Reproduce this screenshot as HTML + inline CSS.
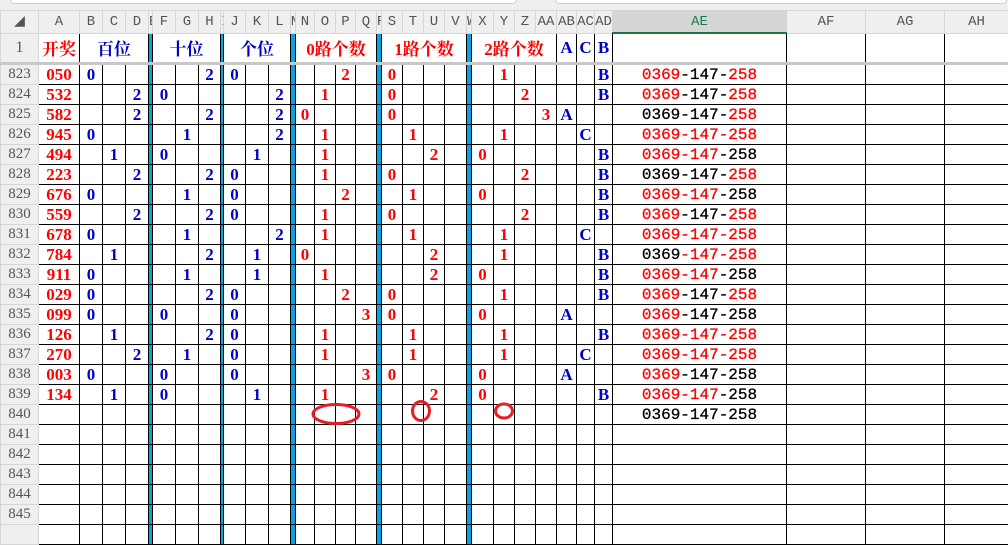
<!DOCTYPE html>
<html><head><meta charset="utf-8">
<style>
body{margin:0;width:1008px;height:528px;overflow:hidden;background:#fff;position:relative}
.top{position:absolute;left:0;top:0;width:1008px;height:10px;background:#efefef}
.top div{position:absolute;top:0;height:3px;background:#fff;border:1px solid #d0d0d0;border-top:none;border-radius:0 0 4px 4px}
table{position:absolute;top:10px;left:0;border-collapse:collapse;table-layout:fixed;width:1008px}
td{border:1px solid #000;padding:0;text-align:center;font:bold 17px "Liberation Serif","Noto Serif CJK SC",serif;white-space:nowrap;overflow:hidden;height:19px;line-height:19px}
th{background:#efefef;border:1px solid #d6d6d6;color:#555;font:normal 15px "Liberation Serif",serif;padding:0;overflow:hidden;white-space:nowrap}
tr.h th{height:21px;font:normal 14px "Liberation Mono",monospace}
tr.one td{height:28px;border-top:1px solid #d6d6d6;border-bottom:3px solid #c8c8c8;font:bold 17px "Liberation Serif","Noto Serif CJK SC",serif}
tr.one th{border-bottom:3px solid #c8c8c8;font-size:16px}
.k{background:#0aa3df}
.r{color:#f00}
.u{color:#0000c8}
td.ae{font:normal 16px "Liberation Mono",monospace;color:#000;-webkit-text-stroke:0.3px}
td.ae span{color:#f00}
th.sel{background:#d6d6d6;color:#1c7a4c;border-bottom:2px solid #217346}
</style></head><body>
<div class="top"><div style="left:10px;width:505px"></div><div style="left:555px;width:450px"></div></div>
<table>
<colgroup><col style="width:38px"><col style="width:41px"><col style="width:23px"><col style="width:23px"><col style="width:23px"><col style="width:4px"><col style="width:23px"><col style="width:23px"><col style="width:22px"><col style="width:3px"><col style="width:22px"><col style="width:23px"><col style="width:22px"><col style="width:5px"><col style="width:19px"><col style="width:21px"><col style="width:20px"><col style="width:21px"><col style="width:5px"><col style="width:21px"><col style="width:21px"><col style="width:21px"><col style="width:22px"><col style="width:5px"><col style="width:22px"><col style="width:21px"><col style="width:21px"><col style="width:21px"><col style="width:20px"><col style="width:18px"><col style="width:18px"><col style="width:174px"><col style="width:79px"><col style="width:79px"><col style="width:64px"></colgroup>
<tr class="h"><th>◢</th><th>A</th><th>B</th><th>C</th><th>D</th><th>E</th><th>F</th><th>G</th><th>H</th><th>I</th><th>J</th><th>K</th><th>L</th><th>M</th><th>N</th><th>O</th><th>P</th><th>Q</th><th>R</th><th>S</th><th>T</th><th>U</th><th>V</th><th>W</th><th>X</th><th>Y</th><th>Z</th><th>AA</th><th>AB</th><th>AC</th><th>AD</th><th class="sel">AE</th><th>AF</th><th>AG</th><th>AH</th></tr>
<tr class="one"><th>1</th><td class="r">开奖</td><td colspan="3" class="u">百位</td><td class="k"></td><td colspan="3" class="u">十位</td><td class="k"></td><td colspan="3" class="u">个位</td><td class="k"></td><td colspan="4" class="r">0路个数</td><td class="k"></td><td colspan="4" class="r">1路个数</td><td class="k"></td><td colspan="4" class="r">2路个数</td><td class="u">A</td><td class="u">C</td><td class="u">B</td><td></td><td></td><td></td><td></td></tr>
<tr><th>823</th><td class="r">050</td><td class="u">0</td><td></td><td></td><td class="k"></td><td></td><td></td><td class="u">2</td><td class="k"></td><td class="u">0</td><td></td><td></td><td class="k"></td><td></td><td></td><td class="r">2</td><td></td><td class="k"></td><td class="r">0</td><td></td><td></td><td></td><td class="k"></td><td></td><td class="r">1</td><td></td><td></td><td></td><td></td><td class="u">B</td><td class="ae"><span>0369</span>-147-<span>258</span></td><td></td><td></td><td></td></tr>
<tr><th>824</th><td class="r">532</td><td></td><td></td><td class="u">2</td><td class="k"></td><td class="u">0</td><td></td><td></td><td class="k"></td><td></td><td></td><td class="u">2</td><td class="k"></td><td></td><td class="r">1</td><td></td><td></td><td class="k"></td><td class="r">0</td><td></td><td></td><td></td><td class="k"></td><td></td><td></td><td class="r">2</td><td></td><td></td><td></td><td class="u">B</td><td class="ae"><span>0369</span>-147-<span>258</span></td><td></td><td></td><td></td></tr>
<tr><th>825</th><td class="r">582</td><td></td><td></td><td class="u">2</td><td class="k"></td><td></td><td></td><td class="u">2</td><td class="k"></td><td></td><td></td><td class="u">2</td><td class="k"></td><td class="r">0</td><td></td><td></td><td></td><td class="k"></td><td class="r">0</td><td></td><td></td><td></td><td class="k"></td><td></td><td></td><td></td><td class="r">3</td><td class="u">A</td><td></td><td></td><td class="ae">0369-147-<span>258</span></td><td></td><td></td><td></td></tr>
<tr><th>826</th><td class="r">945</td><td class="u">0</td><td></td><td></td><td class="k"></td><td></td><td class="u">1</td><td></td><td class="k"></td><td></td><td></td><td class="u">2</td><td class="k"></td><td></td><td class="r">1</td><td></td><td></td><td class="k"></td><td></td><td class="r">1</td><td></td><td></td><td class="k"></td><td></td><td class="r">1</td><td></td><td></td><td></td><td class="u">C</td><td></td><td class="ae"><span>0369-147-258</span></td><td></td><td></td><td></td></tr>
<tr><th>827</th><td class="r">494</td><td></td><td class="u">1</td><td></td><td class="k"></td><td class="u">0</td><td></td><td></td><td class="k"></td><td></td><td class="u">1</td><td></td><td class="k"></td><td></td><td class="r">1</td><td></td><td></td><td class="k"></td><td></td><td></td><td class="r">2</td><td></td><td class="k"></td><td class="r">0</td><td></td><td></td><td></td><td></td><td></td><td class="u">B</td><td class="ae"><span>0369-147</span>-258</td><td></td><td></td><td></td></tr>
<tr><th>828</th><td class="r">223</td><td></td><td></td><td class="u">2</td><td class="k"></td><td></td><td></td><td class="u">2</td><td class="k"></td><td class="u">0</td><td></td><td></td><td class="k"></td><td></td><td class="r">1</td><td></td><td></td><td class="k"></td><td class="r">0</td><td></td><td></td><td></td><td class="k"></td><td></td><td></td><td class="r">2</td><td></td><td></td><td></td><td class="u">B</td><td class="ae">0369-147-<span>258</span></td><td></td><td></td><td></td></tr>
<tr><th>829</th><td class="r">676</td><td class="u">0</td><td></td><td></td><td class="k"></td><td></td><td class="u">1</td><td></td><td class="k"></td><td class="u">0</td><td></td><td></td><td class="k"></td><td></td><td></td><td class="r">2</td><td></td><td class="k"></td><td></td><td class="r">1</td><td></td><td></td><td class="k"></td><td class="r">0</td><td></td><td></td><td></td><td></td><td></td><td class="u">B</td><td class="ae"><span>0369-147</span>-258</td><td></td><td></td><td></td></tr>
<tr><th>830</th><td class="r">559</td><td></td><td></td><td class="u">2</td><td class="k"></td><td></td><td></td><td class="u">2</td><td class="k"></td><td class="u">0</td><td></td><td></td><td class="k"></td><td></td><td class="r">1</td><td></td><td></td><td class="k"></td><td class="r">0</td><td></td><td></td><td></td><td class="k"></td><td></td><td></td><td class="r">2</td><td></td><td></td><td></td><td class="u">B</td><td class="ae"><span>0369</span>-147-<span>258</span></td><td></td><td></td><td></td></tr>
<tr><th>831</th><td class="r">678</td><td class="u">0</td><td></td><td></td><td class="k"></td><td></td><td class="u">1</td><td></td><td class="k"></td><td></td><td></td><td class="u">2</td><td class="k"></td><td></td><td class="r">1</td><td></td><td></td><td class="k"></td><td></td><td class="r">1</td><td></td><td></td><td class="k"></td><td></td><td class="r">1</td><td></td><td></td><td></td><td class="u">C</td><td></td><td class="ae"><span>0369-147-258</span></td><td></td><td></td><td></td></tr>
<tr><th>832</th><td class="r">784</td><td></td><td class="u">1</td><td></td><td class="k"></td><td></td><td></td><td class="u">2</td><td class="k"></td><td></td><td class="u">1</td><td></td><td class="k"></td><td class="r">0</td><td></td><td></td><td></td><td class="k"></td><td></td><td></td><td class="r">2</td><td></td><td class="k"></td><td></td><td class="r">1</td><td></td><td></td><td></td><td></td><td class="u">B</td><td class="ae">0369<span>-147-258</span></td><td></td><td></td><td></td></tr>
<tr><th>833</th><td class="r">911</td><td class="u">0</td><td></td><td></td><td class="k"></td><td></td><td class="u">1</td><td></td><td class="k"></td><td></td><td class="u">1</td><td></td><td class="k"></td><td></td><td class="r">1</td><td></td><td></td><td class="k"></td><td></td><td></td><td class="r">2</td><td></td><td class="k"></td><td class="r">0</td><td></td><td></td><td></td><td></td><td></td><td class="u">B</td><td class="ae"><span>0369-147</span>-258</td><td></td><td></td><td></td></tr>
<tr><th>834</th><td class="r">029</td><td class="u">0</td><td></td><td></td><td class="k"></td><td></td><td></td><td class="u">2</td><td class="k"></td><td class="u">0</td><td></td><td></td><td class="k"></td><td></td><td></td><td class="r">2</td><td></td><td class="k"></td><td class="r">0</td><td></td><td></td><td></td><td class="k"></td><td></td><td class="r">1</td><td></td><td></td><td></td><td></td><td class="u">B</td><td class="ae"><span>0369</span>-147-<span>258</span></td><td></td><td></td><td></td></tr>
<tr><th>835</th><td class="r">099</td><td class="u">0</td><td></td><td></td><td class="k"></td><td class="u">0</td><td></td><td></td><td class="k"></td><td class="u">0</td><td></td><td></td><td class="k"></td><td></td><td></td><td></td><td class="r">3</td><td class="k"></td><td class="r">0</td><td></td><td></td><td></td><td class="k"></td><td class="r">0</td><td></td><td></td><td></td><td class="u">A</td><td></td><td></td><td class="ae"><span>0369</span>-147-258</td><td></td><td></td><td></td></tr>
<tr><th>836</th><td class="r">126</td><td></td><td class="u">1</td><td></td><td class="k"></td><td></td><td></td><td class="u">2</td><td class="k"></td><td class="u">0</td><td></td><td></td><td class="k"></td><td></td><td class="r">1</td><td></td><td></td><td class="k"></td><td></td><td class="r">1</td><td></td><td></td><td class="k"></td><td></td><td class="r">1</td><td></td><td></td><td></td><td></td><td class="u">B</td><td class="ae"><span>0369-147-258</span></td><td></td><td></td><td></td></tr>
<tr><th>837</th><td class="r">270</td><td></td><td></td><td class="u">2</td><td class="k"></td><td></td><td class="u">1</td><td></td><td class="k"></td><td class="u">0</td><td></td><td></td><td class="k"></td><td></td><td class="r">1</td><td></td><td></td><td class="k"></td><td></td><td class="r">1</td><td></td><td></td><td class="k"></td><td></td><td class="r">1</td><td></td><td></td><td></td><td class="u">C</td><td></td><td class="ae"><span>0369-147-258</span></td><td></td><td></td><td></td></tr>
<tr><th>838</th><td class="r">003</td><td class="u">0</td><td></td><td></td><td class="k"></td><td class="u">0</td><td></td><td></td><td class="k"></td><td class="u">0</td><td></td><td></td><td class="k"></td><td></td><td></td><td></td><td class="r">3</td><td class="k"></td><td class="r">0</td><td></td><td></td><td></td><td class="k"></td><td class="r">0</td><td></td><td></td><td></td><td class="u">A</td><td></td><td></td><td class="ae"><span>0369</span>-147-258</td><td></td><td></td><td></td></tr>
<tr><th>839</th><td class="r">134</td><td></td><td class="u">1</td><td></td><td class="k"></td><td class="u">0</td><td></td><td></td><td class="k"></td><td></td><td class="u">1</td><td></td><td class="k"></td><td></td><td class="r">1</td><td></td><td></td><td class="k"></td><td></td><td></td><td class="r">2</td><td></td><td class="k"></td><td class="r">0</td><td></td><td></td><td></td><td></td><td></td><td class="u">B</td><td class="ae"><span>0369-147</span>-258</td><td></td><td></td><td></td></tr>
<tr><th>840</th><td></td><td></td><td></td><td></td><td class="k"></td><td></td><td></td><td></td><td class="k"></td><td></td><td></td><td></td><td class="k"></td><td></td><td></td><td></td><td></td><td class="k"></td><td></td><td></td><td></td><td></td><td class="k"></td><td></td><td></td><td></td><td></td><td></td><td></td><td></td><td class="ae">0369-147-258</td><td></td><td></td><td></td></tr>
<tr><th>841</th><td></td><td></td><td></td><td></td><td class="k"></td><td></td><td></td><td></td><td class="k"></td><td></td><td></td><td></td><td class="k"></td><td></td><td></td><td></td><td></td><td class="k"></td><td></td><td></td><td></td><td></td><td class="k"></td><td></td><td></td><td></td><td></td><td></td><td></td><td></td><td></td><td></td><td></td><td></td></tr>
<tr><th>842</th><td></td><td></td><td></td><td></td><td class="k"></td><td></td><td></td><td></td><td class="k"></td><td></td><td></td><td></td><td class="k"></td><td></td><td></td><td></td><td></td><td class="k"></td><td></td><td></td><td></td><td></td><td class="k"></td><td></td><td></td><td></td><td></td><td></td><td></td><td></td><td></td><td></td><td></td><td></td></tr>
<tr><th>843</th><td></td><td></td><td></td><td></td><td class="k"></td><td></td><td></td><td></td><td class="k"></td><td></td><td></td><td></td><td class="k"></td><td></td><td></td><td></td><td></td><td class="k"></td><td></td><td></td><td></td><td></td><td class="k"></td><td></td><td></td><td></td><td></td><td></td><td></td><td></td><td></td><td></td><td></td><td></td></tr>
<tr><th>844</th><td></td><td></td><td></td><td></td><td class="k"></td><td></td><td></td><td></td><td class="k"></td><td></td><td></td><td></td><td class="k"></td><td></td><td></td><td></td><td></td><td class="k"></td><td></td><td></td><td></td><td></td><td class="k"></td><td></td><td></td><td></td><td></td><td></td><td></td><td></td><td></td><td></td><td></td><td></td></tr>
<tr><th>845</th><td></td><td></td><td></td><td></td><td class="k"></td><td></td><td></td><td></td><td class="k"></td><td></td><td></td><td></td><td class="k"></td><td></td><td></td><td></td><td></td><td class="k"></td><td></td><td></td><td></td><td></td><td class="k"></td><td></td><td></td><td></td><td></td><td></td><td></td><td></td><td></td><td></td><td></td><td></td></tr>
<tr><th></th><td></td><td></td><td></td><td></td><td class="k"></td><td></td><td></td><td></td><td class="k"></td><td></td><td></td><td></td><td class="k"></td><td></td><td></td><td></td><td></td><td class="k"></td><td></td><td></td><td></td><td></td><td class="k"></td><td></td><td></td><td></td><td></td><td></td><td></td><td></td><td></td><td></td><td></td><td></td></tr>
</table>
<svg style="position:absolute;left:0;top:0" width="1008" height="528">
<ellipse cx="336" cy="414" rx="23" ry="9.5" fill="none" stroke="#e81c24" stroke-width="3"/>
<ellipse cx="421" cy="411" rx="8.5" ry="9.5" fill="none" stroke="#e81c24" stroke-width="3"/>
<ellipse cx="504" cy="411" rx="8.5" ry="7" fill="none" stroke="#e81c24" stroke-width="3"/>
</svg>
</body></html>
